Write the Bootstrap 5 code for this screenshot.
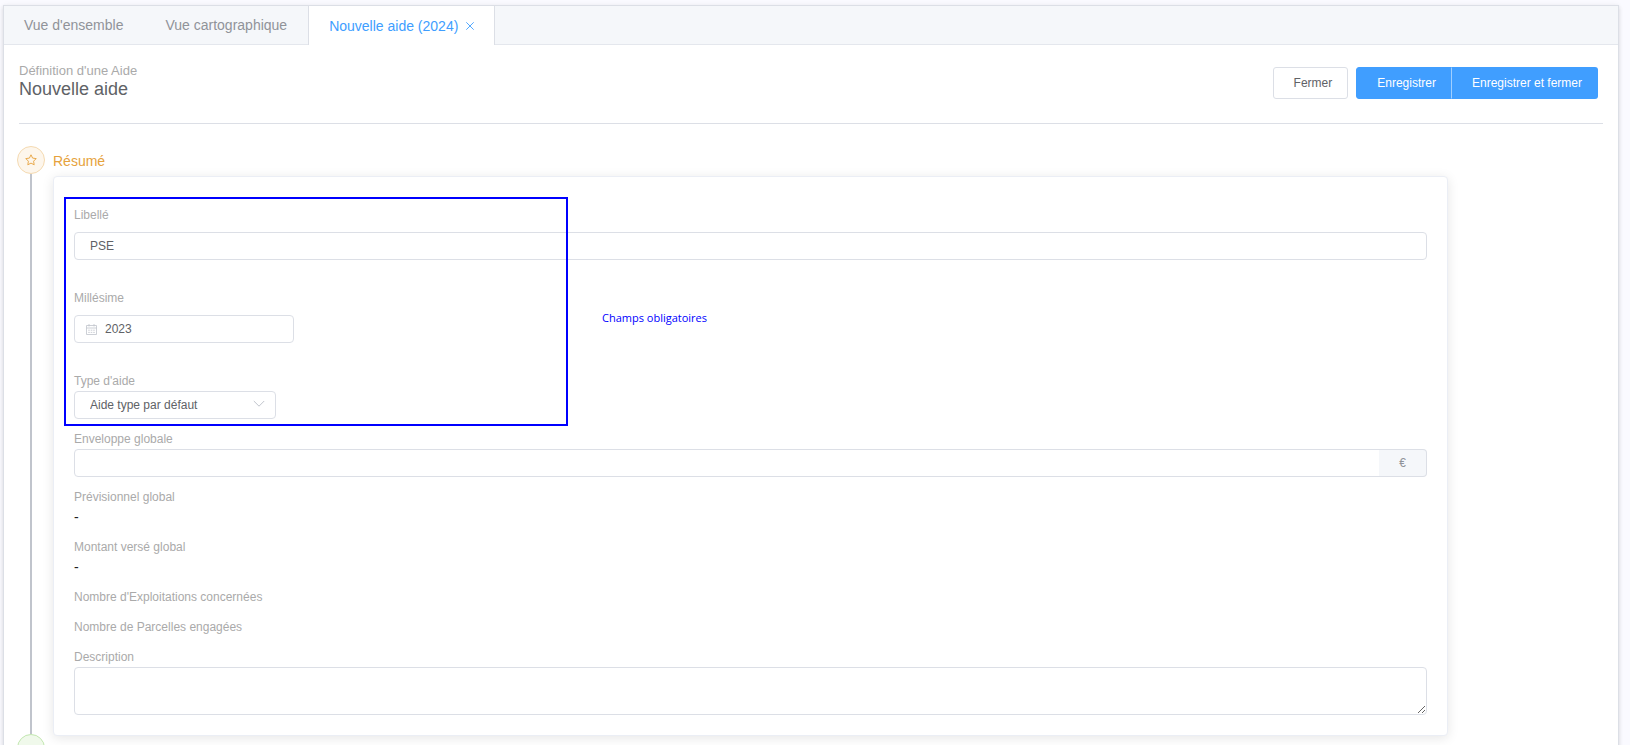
<!DOCTYPE html>
<html lang="fr">
<head>
<meta charset="utf-8">
<meta name="viewport" content="width=device-width, initial-scale=1">
<title>Nouvelle aide (2024)</title>
<link href="https://cdn.jsdelivr.net/npm/bootstrap@5.3.0/dist/css/bootstrap.min.css" rel="stylesheet">
<style>
body { font-family: "Liberation Sans", Arial, sans-serif; font-size: 12px; line-height: 20px; color: #606266; background: #fafaff; padding: 5px 11px 0 3px; }
.panel { background: #fff; border: 1px solid #dcdfe6; box-shadow: 0 2px 4px rgba(0,0,0,.12), 0 0 6px rgba(0,0,0,.04); }
.tabs { background: #f5f7fa; border-bottom: 1px solid #e4e7ed; font-size: 14px; }
.tabs a { height: 39px; line-height: 38px; padding: 0 20px; margin-bottom: -1px; border: 1px solid transparent; border-width: 0 1px; color: #909399; text-decoration: none; }
.tabs li:first-child a { border-left: 0; }
.tabs a.active { background: #fff; color: #409eff; border-color: #dcdfe6; }
.tabs svg { margin-left: 8px; }
.page-body { padding: 18px 15px 0; }
.page-head { padding: 4px 5px 23px 0; border-bottom: 1px solid #dcdfe6; margin-bottom: 22px; }
.kicker { font-size: 13px; line-height: 15px; color: #a8abb2; color: #aaa; }
.page-title { font-size: 18px; line-height: 22px; font-weight: 400; margin: 0; }
.action { font-size: 12px; line-height: 14px; padding: 8px 15px 8px 20px; border-radius: 3px; border-color: #dcdfe6; color: #606266; background: #fff; }
.action-main { background: #409eff; border-color: #409eff; color: #fff; }
.action-main + .action-main { border-left-color: rgba(255,255,255,.5); background-clip: border-box; }
.node { width: 28px; height: 28px; border-radius: 50%; border: 1px solid #f5dab1; background: #fdf6ec; color: #e6a23c; }
.node-ok { border-color: #c2e7b0; background: #f0f9eb; color: #67c23a; }
.rail { width: 28px; margin-left: -2px; margin-right: 8px; }
.rail-line { width: 2px; background: #c0c4cc; }
.step-title { font-size: 14px; line-height: 30px; font-weight: 400; margin: 0; color: #e6a23c; }
.step-title.ok { color: #67c23a; }
.sheet { width: 90%; padding: 20px; margin-bottom: -2px; background: #fff; border: 1px solid #ebeef5; border-radius: 4px; box-shadow: 0 2px 12px rgba(0,0,0,.1); }
.field { margin-bottom: 10px; }
.field label, .field .caption { display: block; color: #aaa; }
.field-wide { margin-bottom: 28px; }
.field-wide label { margin-bottom: 7px; }
.ctl, .ctl:focus { display: block; width: 100%; height: 28px; padding: 0 15px; border: 1px solid #dcdfe6; border-radius: 4px; background: #fff; color: #606266; font-size: 12px; line-height: 26px; }
textarea.ctl { height: 48px; resize: vertical; }
select.ctl { appearance: none; }
.year-box { width: 220px; }
.year-box .ctl { padding-left: 30px; }
.year-box svg { left: 12px; top: 9px; }
.type-box { width: 202px; }
.type-box svg { right: 11px; top: 8px; }
.unit { padding: 0 20px; font-size: 12px; line-height: 26px; color: #909399; background: #f5f7fa; border: 1px solid #dcdfe6; border-radius: 4px; }
.value { font-size: 14px; color: #222; }
.required-frame { left: -10px; top: 0; bottom: -7px; width: 504px; border: 2px solid #00f; pointer-events: none; }
.required-note { left: 528px; top: 111px; font: 11px/20px "Open Sans", "Noto Sans", sans-serif; color: #00f; white-space: nowrap; }
</style>
<script src="https://cdn.jsdelivr.net/npm/bootstrap@5.3.0/dist/js/bootstrap.bundle.min.js"></script>
</head>
<body class="vh-100 overflow-hidden">
<main class="panel">
  <ul class="tabs list-unstyled d-flex mb-0">
    <li><a href="#" class="d-block">Vue d'ensemble</a></li>
    <li><a href="#" class="d-block">Vue cartographique</a></li>
    <li><a href="#" class="d-flex align-items-center active" aria-current="page">Nouvelle aide (2024)<svg width="8" height="8" viewBox="0 0 8 8" fill="none" stroke="currentColor" stroke-width=".9"><path d="M.3.3l7.4 7.4M7.7.3L.3 7.7"/></svg></a></li>
  </ul>
  <div class="page-body">
    <header class="page-head d-flex justify-content-between">
      <div style="margin-top:-4px">
        <div class="kicker">Définition d'une Aide</div>
        <h1 class="page-title">Nouvelle aide</h1>
      </div>
      <div class="d-flex align-items-start">
        <button type="button" class="btn action me-2">Fermer</button>
        <div class="btn-group">
          <button type="button" class="btn action action-main">Enregistrer</button>
          <button type="button" class="btn action action-main">Enregistrer et fermer</button>
        </div>
      </div>
    </header>

    <section class="d-flex">
      <div class="rail d-flex flex-column align-items-center flex-shrink-0">
        <div class="node d-flex align-items-center justify-content-center flex-shrink-0">
          <svg width="12" height="12" viewBox="0 0 12 12" fill="none" stroke="currentColor" stroke-width=".9" stroke-linejoin="round"><path d="M6 .8l1.6 3.3 3.6.5-2.6 2.6.6 3.6L6 9.1l-3.2 1.7.6-3.6L.8 4.6l3.6-.5z"/></svg>
        </div>
        <div class="rail-line flex-grow-1"></div>
      </div>
      <div class="flex-grow-1">
        <h2 class="step-title">Résumé</h2>
        <form class="sheet">
          <div class="position-relative">
            <div class="field field-wide pt-2">
              <label for="libelle">Libellé</label>
              <input id="libelle" class="ctl" type="text" value="PSE">
            </div>
            <div class="field field-wide">
              <label for="millesime">Millésime</label>
              <div class="year-box position-relative">
                <input id="millesime" class="ctl" type="text" value="2023">
                <svg class="position-absolute" width="11" height="11" viewBox="0 0 11 11" fill="none" stroke="#c0c4cc"><path d="M.5 1.5h10v9H.5zM.5 4h10M3 0v2.5M8 0v2.5M2.2 6.2h1.6M4.7 6.2h1.6M7.2 6.2h1.6M2.2 8.4h1.6M4.7 8.4h1.6M7.2 8.4h1.6" stroke-width=".8"/></svg>
              </div>
            </div>
            <div class="field">
              <label for="type">Type d'aide</label>
              <div class="type-box position-relative">
                <select id="type" class="ctl"><option>Aide type par défaut</option></select>
                <svg class="position-absolute" width="12" height="10" viewBox="0 0 12 10" fill="none" stroke="#c0c4cc"><path d="M.8 2L6 7.2 11.2 2"/></svg>
              </div>
            </div>
            <div class="required-frame position-absolute"></div>
            <div class="required-note position-absolute">Champs obligatoires</div>
          </div>
          <div class="field">
            <label for="enveloppe">Enveloppe globale</label>
            <div class="input-group flex-nowrap">
              <input id="enveloppe" class="ctl rounded-end-0" type="text">
              <span class="unit rounded-start-0 border-start-0">€</span>
            </div>
          </div>
          <div class="field">
            <div class="caption">Prévisionnel global</div>
            <div class="value">-</div>
          </div>
          <div class="field">
            <div class="caption">Montant versé global</div>
            <div class="value">-</div>
          </div>
          <div class="field"><div class="caption">Nombre d'Exploitations concernées</div></div>
          <div class="field"><div class="caption">Nombre de Parcelles engagées</div></div>
          <div>
            <div class="field mb-0">
              <label for="description">Description</label>
              <textarea id="description" class="ctl"></textarea>
            </div>
          </div>
        </form>
      </div>
    </section>

    <section class="d-flex">
      <div class="rail flex-shrink-0"><div class="node node-ok"></div></div>
    </section>
  </div>
</main>
</body>
</html>
